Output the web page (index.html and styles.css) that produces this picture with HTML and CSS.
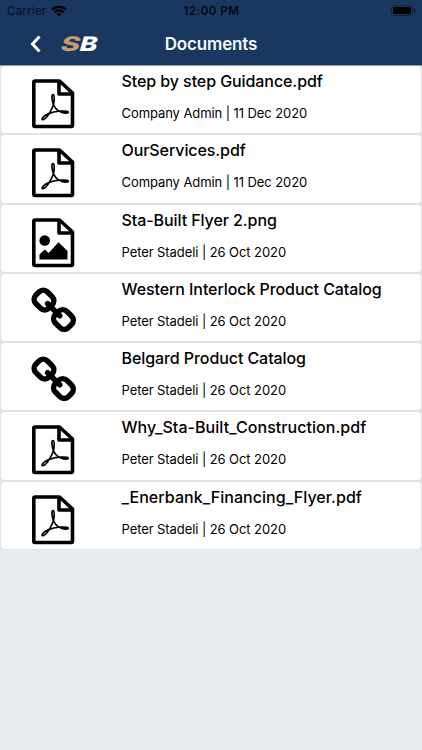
FILE: index.html
```html
<!DOCTYPE html>
<html lang="en">
<head>
    <meta charset="UTF-8">
    <meta name="viewport" content="width=device-width, initial-scale=1.0">
    <title>Documents</title>
    <link rel="stylesheet" href="styles.css">
</head>
<body>
    <!-- shared icons -->
    <svg class="sprite" aria-hidden="true">
        <symbol id="icon-pdf" viewBox="0 0 46 50">
            <path class="line" d="M4 2H28.500L41.500 14V46.300a1.200 1.200 0 0 1-1.200 1.200H4a1.200 1.200 0 0 1-1.200-1.200V3.200A1.200 1.200 0 0 1 4 2z"/>
            <path class="line" d="M28 2V15H41"/>
            <path class="thin" d="M22 15.500c-1.100 0-1.300 2.300-.9 4.500.2 2.100.6 4 1.300 5.800 1.300 2.700 3.200 4.800 5.500 6.300 2.200 1.300 4.600 2.100 7 2.100 2.800 0 3.200-1.400 1-1.900-1.700-.4-4.800-.3-8-.1-3.500.4-6.700 1.100-9.600 2.200-2.700 1-5 2.300-6.200 3.800-1.400 1.700-1.200 2.700-.1 2.500 1.700-.3 4.300-2.900 6.300-6.300 1.700-2.900 3.200-6 4.100-8.400.5-2.500.8-4.300.8-6 0-2.600-.2-4.500-1.200-4.500z"/>
        </symbol>
        <symbol id="icon-image" viewBox="0 0 46 50">
            <path class="line" d="M4 2H28.500L41.500 14V46.300a1.200 1.200 0 0 1-1.200 1.200H4a1.200 1.200 0 0 1-1.200-1.200V3.200A1.200 1.200 0 0 1 4 2z"/>
            <path class="line" d="M28 2V15H41"/>
            <circle cx="13.700" cy="22.500" r="5.300"/>
            <path d="M8.500 41.500V36.500l5.200-5 4 3.500L27.500 24.300l9 8.700v8.500z"/>
        </symbol>
        <symbol id="icon-link" viewBox="0 0 46 50">
            <g class="chain" transform="translate(22.700 22.800) rotate(45)">
                <rect x="-23" y="-8.200" width="18.500" height="16.400" rx="6"/>
                <rect x="4.500" y="-8.200" width="18.500" height="16.400" rx="6"/>
                <path d="M-8.500 0H8.500"/>
            </g>
        </symbol>
    </svg>

    <header class="header">
        <div class="status">
            <div class="carrier">
                <span>Carrier</span>
                <svg class="wifi" viewBox="0 0 16 12">
                    <path d="M1 4.700a10 10 0 0 1 14 0M3.400 7.300a6.500 6.500 0 0 1 9.200 0"/>
                    <path class="dot" d="M8 11.600L5.500 9.200a3.600 3.600 0 0 1 5 0z"/>
                </svg>
            </div>
            <span class="time">12:00 PM</span>
            <svg class="battery" viewBox="0 0 25 12">
                <rect class="case" x=".5" y=".5" width="21" height="10" rx="3"/>
                <rect x="2" y="2" width="18" height="7" rx="1.500"/>
                <path d="M23 4v3.500q1-.5 1-1.700T23 4z"/>
            </svg>
        </div>
        <div class="navbar">
            <div class="nav-left">
                <svg class="back" viewBox="0 0 12 18">
                    <path d="M9.500 1.500L2.500 9l7 7.500"/>
                </svg>
                <svg class="logo" viewBox="0 0 40 18">
                    <text class="logo-s" transform="translate(-.5 16) skewX(-4) scale(1.450 1)">S</text>
                    <text class="logo-b" transform="translate(18.500 16) skewX(-4) scale(1.320 1)">B</text>
                </svg>
            </div>
            <h1>Documents</h1>
        </div>
    </header>

    <main class="list">
        <article class="card">
            <svg class="icon"><use href="#icon-pdf"/></svg>
            <div class="info">
                <h2>Step by step Guidance.pdf</h2>
                <p>Company Admin | 11 Dec 2020</p>
            </div>
        </article>
        <article class="card">
            <svg class="icon"><use href="#icon-pdf"/></svg>
            <div class="info">
                <h2>OurServices.pdf</h2>
                <p>Company Admin | 11 Dec 2020</p>
            </div>
        </article>
        <article class="card">
            <svg class="icon"><use href="#icon-image"/></svg>
            <div class="info">
                <h2>Sta-Built Flyer 2.png</h2>
                <p>Peter Stadeli | 26 Oct 2020</p>
            </div>
        </article>
        <article class="card">
            <svg class="icon"><use href="#icon-link"/></svg>
            <div class="info">
                <h2>Western Interlock Product Catalog</h2>
                <p>Peter Stadeli | 26 Oct 2020</p>
            </div>
        </article>
        <article class="card">
            <svg class="icon"><use href="#icon-link"/></svg>
            <div class="info">
                <h2>Belgard Product Catalog</h2>
                <p>Peter Stadeli | 26 Oct 2020</p>
            </div>
        </article>
        <article class="card">
            <svg class="icon"><use href="#icon-pdf"/></svg>
            <div class="info">
                <h2 class="wide">Why_Sta-Built_Construction.pdf</h2>
                <p>Peter Stadeli | 26 Oct 2020</p>
            </div>
        </article>
        <article class="card">
            <svg class="icon"><use href="#icon-pdf"/></svg>
            <div class="info">
                <h2 class="wide">_Enerbank_Financing_Flyer.pdf</h2>
                <p>Peter Stadeli | 26 Oct 2020</p>
            </div>
        </article>
    </main>
</body>
</html>
```
FILE: styles.css
```css
* {
    box-sizing: border-box;
}
body {
    margin: 0;
    min-height: 100vh;
    font-family: Inter, "Liberation Sans", sans-serif;
    background: #e8edf0;
    color: #000;
}
h1, h2, p {
    margin: 0;
}
svg {
    display: block;
    flex: none;
}
.sprite {
    display: none;
}

/* header */
.header {
    height: 66px;
    background: #19375f;
    border-bottom: 1px solid #8d9bb0;
}
.status {
    display: grid;
    grid-template-columns: 1fr auto 1fr;
    align-items: center;
    height: 22px;
    padding: 0 6px 0 7px;
    font-size: 11.5px;
}
.carrier {
    display: flex;
    align-items: center;
    gap: 5px;
    color: #08111f;
    letter-spacing: .25px;
}
.wifi {
    width: 16px;
    height: 12px;
    fill: none;
    stroke: #000;
    stroke-width: 2.1;
}
.wifi .dot {
    fill: #000;
    stroke: none;
}
.time {
    font-weight: 600;
    letter-spacing: .5px;
    color: #040a14;
}
.battery {
    width: 25px;
    height: 12px;
    justify-self: end;
}
.battery .case {
    fill: none;
    stroke: #10233d;
}
.navbar {
    display: grid;
    grid-template-columns: 1fr auto 1fr;
    align-items: center;
    height: 43px;
}
.nav-left {
    display: flex;
    align-items: center;
    gap: 19px;
    padding-left: 30px;
}
.back {
    width: 12px;
    height: 18px;
    fill: none;
    stroke: #fff;
    stroke-width: 3;
}
.logo {
    width: 40px;
    height: 18px;
    overflow: visible;
    font-size: 20px;
    font-weight: 800;
    font-style: italic;
}
.logo-s {
    fill: #c79c6f;
}
.logo-b {
    fill: #fff;
    stroke: #19375f;
    stroke-width: 1;
    paint-order: stroke;
}
h1 {
    font-size: 17px;
    font-weight: 600;
    letter-spacing: -.15px;
    color: #f4f8fc;
}

/* documents */
.list {
    background: #e1e3e4;
    height: 484px;
    display: grid;
    grid-auto-rows: 69.3px;
}
.card {
    display: flex;
    margin: 0 1px 2px;
    padding-left: 30px;
    background: #fff;
    border-radius: 4px;
}
.icon {
    width: 46px;
    height: 50px;
    margin-top: 13px;
}
.icon, .sprite {
    fill: #000;
}
.line {
    fill: none;
    stroke: #000;
    stroke-width: 3.6;
    stroke-linejoin: round;
}
.thin {
    fill: none;
    stroke: #000;
    stroke-width: 1.7;
    stroke-linejoin: round;
}
.chain {
    fill: none;
    stroke: #000;
    stroke-width: 5.5;
    stroke-linecap: round;
}
.info {
    padding: 5px 0 0 44.5px;
    white-space: nowrap;
}
h2 {
    font-size: 16px;
    line-height: 20px;
    font-weight: 500;
    letter-spacing: -.08px;
}
/* file names with underscores */
h2.wide {
    letter-spacing: .05px;
}
p {
    margin-top: 13px;
    font-size: 13px;
    line-height: 18px;
    letter-spacing: -.08px;
}
```
